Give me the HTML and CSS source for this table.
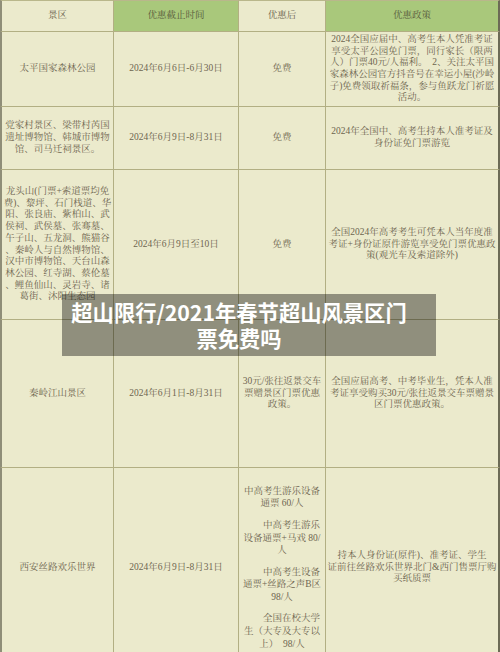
FILE: index.html
```html
<!DOCTYPE html>
<html lang="zh-CN">
<head>
<meta charset="utf-8">
<title>超山限行/2021年春节超山风景区门票免费吗</title>
<link rel="stylesheet" href="styles.css">
</head>
<body>
<div class="page">
  <table class="promo">
    <colgroup>
      <col class="c1"><col class="c2"><col class="c3"><col class="c4">
    </colgroup>
    <thead>
      <tr class="head">
        <th>景区</th>
        <th class="hl">优惠截止时间</th>
        <th>优惠后</th>
        <th class="hl">优惠政策</th>
      </tr>
    </thead>
    <tbody>
      <tr class="r1">
        <td>太平国家森林公园</td>
        <td>2024年6月6日-6月30日</td>
        <td>免费</td>
        <td>2024全国应届中、高考生本人凭准考证享受太平公园免门票，同行家长（限两人）门票40元/人福利。　2、关注太平国家森林公园官方抖音号在幸运小屋(沙岭子)免费领取祈福条，参与鱼跃龙门祈愿活动。</td>
      </tr>
      <tr class="r2">
        <td>党家村景区、梁带村芮国遗址博物馆、韩城市博物馆、司马迁祠景区。</td>
        <td>2024年6月9日-8月31日</td>
        <td>免费</td>
        <td>2024年全国中、高考生持本人准考证及身份证免门票游览</td>
      </tr>
      <tr class="r3">
        <td>龙头山(门票+索道票均免费)、黎坪、石门栈道、华阳、张良庙、紫柏山、武侯祠、武侯墓、张骞墓、午子山、五龙洞、熊猫谷、秦岭人与自然博物馆、汉中市博物馆、天台山森林公园、红寺湖、蔡伦墓、鲤鱼仙山、灵岩寺、诸葛街、沐阳生态园</td>
        <td>2024年6月9日至10日</td>
        <td>免费</td>
        <td>全国2024年高考考生可凭本人当年度准考证+身份证原件游览享受免门票优惠政策(观光车及索道除外)</td>
      </tr>
      <tr class="r4">
        <td>秦岭江山景区</td>
        <td>2024年6月1日-8月31日</td>
        <td>30元/张往返景交车票赠景区门票优惠政策。</td>
        <td>全国应届高考、中考毕业生，凭本人准考证享受购买30元/张往返景交车票赠景区门票优惠政策。</td>
      </tr>
      <tr class="r5">
        <td>西安丝路欢乐世界</td>
        <td>2024年6月9日-8月31日</td>
        <td class="tiers">
          <p>中高考生游乐设备通票 60/人</p>
          <p class="ind">中高考生游乐设备通票+马戏 80/人</p>
          <p class="ind">中高考生设备通票+丝路之声B区 98/人</p>
          <p class="ind">全国在校大学生（大专及大专以上）　98/人</p>
        </td>
        <td>持本人身份证(原件)、准考证、学生<br>证前往丝路欢乐世界北门&amp;西门售票厅购买纸质票</td>
      </tr>
    </tbody>
  </table>
  <div class="caption-overlay">超山限行/2021年春节超山风景区门票免费吗</div>
</div>
</body>
</html>
```
FILE: styles.css
```css
html, body {
  margin: 0;
  padding: 0;
  background: #ebeacc;
  overflow: hidden;
}

.page {
  position: relative;
  width: 500px;
  height: 652px;
  overflow: hidden;
}

.promo {
  width: 500px;
  table-layout: fixed;
  border-collapse: separate;
  border-spacing: 0;
  font-family: "Liberation Serif", "Noto Serif CJK SC", "Noto Sans CJK SC", serif;
  font-size: 9.5px;
  line-height: 11.7px;
  color: #6e654f;
  text-align: center;
  background: #ebeacc;
}

.c1 { width: 114px; }
.c2 { width: 125px; }
.c3 { width: 87px; }
.c4 { width: 174px; }

.promo th,
.promo td {
  border-right: 1px solid #b2af83;
  border-bottom: 1px solid #b2af83;
  padding: 0 2px;
  vertical-align: middle;
  font-weight: normal;
  line-break: anywhere;
}

.promo th:first-child,
.promo td:first-child {
  border-left: 2px solid #8f8e78;
  padding: 0 1px;
}

.promo th:last-child,
.promo td:last-child {
  border-right: 2px solid #6c6b56;
  padding: 0 1px;
}

.promo thead th {
  border-top: 1px solid #b9b78b;
  color: #6a624c;
}

.promo thead th.hl {
  background: #a9c87b;
  color: #585a3c;
}

.head { height: 32px; }
.r1 { height: 75px; }
.r2 { height: 63px; }
.r3 { height: 150px; }
.r4 { height: 148px; }
.r5 { height: 200px; }

.tiers p {
  margin: 0 0 9px;
  line-height: 12.6px;
}

.tiers p:last-child {
  margin-bottom: 0;
}

.tiers p.ind {
  text-indent: 2em;
}

.caption-overlay {
  position: absolute;
  left: 62px;
  top: 294px;
  width: 374px;
  box-sizing: border-box;
  padding: 5px 28px 5px 8px;
  background: rgba(0, 0, 0, 0.39);
  color: #ffffff;
  font-family: "Noto Sans CJK SC", "Noto Sans", sans-serif;
  font-weight: 700;
  font-size: 21.3px;
  line-height: 26px;
  text-align: center;
}
```
